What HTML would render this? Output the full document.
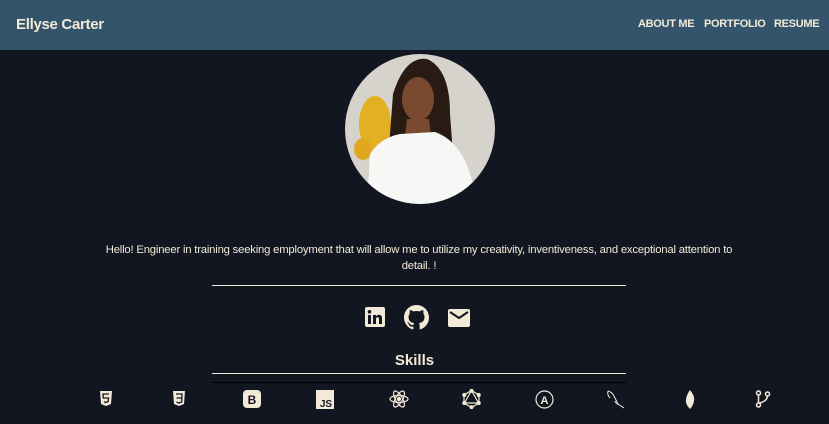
<!DOCTYPE html>
<html><head><meta charset="utf-8"><style>
*{margin:0;padding:0;box-sizing:border-box}
body{width:829px;height:424px;overflow:hidden;background:#121621;font-family:"Liberation Sans",sans-serif;color:#f2ead7;position:relative}
.hdr{position:absolute;left:0;top:0;width:829px;height:50px;background:#34546b}
.brand{position:absolute;left:16px;top:16px;font-size:15px;font-weight:bold;letter-spacing:-0.3px}
.nav{position:absolute;top:18px;font-size:11px;font-weight:bold;letter-spacing:-0.3px}
.p{position:absolute;left:102px;width:634px;top:242px;text-align:center;font-size:11.3px;line-height:16px;letter-spacing:-0.2px}
.ln{position:absolute;left:212px;width:414px;height:1px;background:#f2ead7}
.ic{position:absolute}
</style></head><body>
<div class="hdr"></div>
<div class="brand">Ellyse Carter</div>
<div class="nav" style="left:638px">ABOUT ME</div>
<div class="nav" style="left:704px">PORTFOLIO</div>
<div class="nav" style="left:774px">RESUME</div>

<svg style="position:absolute;left:345px;top:54px" width="150" height="150" viewBox="0 0 150 150">
<defs><clipPath id="c"><circle cx="75" cy="75" r="75"/></clipPath></defs>
<g clip-path="url(#c)">
<rect width="150" height="150" fill="#d6d2cc"/>
<ellipse cx="30" cy="70" rx="16" ry="28" fill="#e3b024"/>
<ellipse cx="18" cy="95" rx="9" ry="11" fill="#e0a820"/>
<path d="M48 40 Q60 2 82 5 Q105 15 105 60 L108 100 L40 120 L45 80Z" fill="#2a1a14"/>
<ellipse cx="73" cy="45" rx="16" ry="22" fill="#7a4a30"/>
<path d="M62 65 L84 65 L86 82 L60 82Z" fill="#7a4a30"/>
<path d="M22 150 L25 100 Q35 84 55 80 L90 78 Q118 88 128 130 L125 150Z" fill="#f7f7f5"/>
</g></svg>

<div class="p">Hello! Engineer in training seeking employment that will allow me to utilize my creativity, inventiveness, and exceptional attention to detail. !</div>
<div class="ln" style="top:285px"></div>

<svg class="ic" style="left:365px;top:307px" width="20" height="20" viewBox="0 0 20 20"><rect x="0" y="0" width="20" height="20" rx="2" fill="#f2ead7"/><rect x="3" y="8" width="3" height="9" fill="#121621"/><circle cx="4.5" cy="4.8" r="1.8" fill="#121621"/><path d="M8 8h3v1.5q1-1.8 3-1.8 3 0 3 3.5V17h-3v-5q0-1.7-1.4-1.7T11 12v5H8z" fill="#121621"/></svg>
<svg class="ic" style="left:404px;top:305px" width="25" height="25" viewBox="0 0 16 16"><path fill="#f2ead7" d="M8 0C3.58 0 0 3.58 0 8c0 3.54 2.290 6.53 5.470 7.59.4.07.55-.17.55-.38 0-.19-.01-.82-.01-1.49-2.01.37-2.53-.49-2.69-.94-.09-.23-.48-.94-.82-1.13-.28-.15-.68-.52-.01-.53.63-.01 1.08.58 1.23.82.72 1.21 1.870.87 2.330.66.07-.52.28-.87.51-1.07-1.78-.2-3.64-.89-3.64-3.95 0-.87.31-1.59.82-2.15-.08-.2-.36-1.02.08-2.12 0 0 .67-.21 2.2.82.64-.18 1.32-.27 2-.27.68 0 1.36.09 2 .27 1.53-1.04 2.2-.82 2.2-.82.44 1.1.16 1.92.08 2.12.51.56.82 1.27.82 2.15 0 3.07-1.87 3.75-3.65 3.95.29.25.54.73.54 1.48 0 1.07-.01 1.93-.01 2.2 0 .21.15.46.55.38A8.013 8.013 0 0016 8c0-4.42-3.58-8-8-8z"/></svg>
<svg class="ic" style="left:448px;top:309px" width="22" height="18" viewBox="0 0 22 18"><rect width="22" height="18" rx="2" fill="#f2ead7"/><path d="M2 3l9 6 9-6" stroke="#121621" stroke-width="2" fill="none"/></svg>

<div style="position:absolute;left:0;width:829px;top:352px;text-align:center;font-size:15px;font-weight:bold">Skills</div>
<div class="ln" style="top:373px"></div>
<div class="ln" style="top:382px;background:#000"></div>

<svg class="ic" style="left:99px;top:391px" width="14" height="16" viewBox="0 0 14 16"><path d="M1 0h12l-1 13-5 2-5-2z" fill="#f2ead7"/><path d="M10 3H4l.3 4h5.2l-.3 3.5L7 11.5 5 10.8" stroke="#121621" stroke-width="1.3" fill="none"/></svg>
<svg class="ic" style="left:172px;top:391px" width="14" height="16" viewBox="0 0 14 16"><path d="M1 0h12l-1 13-5 2-5-2z" fill="#f2ead7"/><path d="M4 3h6l-.3 8L7 12l-2.5-1M4.5 7h5" stroke="#121621" stroke-width="1.3" fill="none"/></svg>
<svg class="ic" style="left:243px;top:390px" width="18" height="18" viewBox="0 0 18 18"><rect width="18" height="18" rx="4" fill="#f2ead7"/><text x="9" y="14" text-anchor="middle" font-size="12" font-weight="bold" fill="#121621" font-family="Liberation Sans">B</text></svg>
<svg class="ic" style="left:316px;top:390px" width="18" height="19" viewBox="0 0 18 19"><rect width="18" height="19" fill="#f2ead7"/><text x="10" y="17" text-anchor="middle" font-size="10" font-weight="bold" fill="#121621" font-family="Liberation Sans">JS</text></svg>
<svg class="ic" style="left:389px;top:389px" width="20" height="20" viewBox="0 0 20 20" fill="none" stroke="#f2ead7" stroke-width="1.2"><ellipse cx="10" cy="10" rx="9" ry="3.5"/><ellipse cx="10" cy="10" rx="9" ry="3.5" transform="rotate(60 10 10)"/><ellipse cx="10" cy="10" rx="9" ry="3.5" transform="rotate(120 10 10)"/><circle cx="10" cy="10" r="1.6" fill="#f2ead7"/></svg>
<svg class="ic" style="left:462px;top:389px" width="19" height="20" viewBox="0 0 19 20" fill="none" stroke="#f2ead7" stroke-width="1.2"><path d="M9.5 1.5L17 6v8l-7.5 4.5L2 14V6zM9.5 1.5L2.5 14h14z"/><g fill="#f2ead7"><circle cx="9.5" cy="1.8" r="1.5"/><circle cx="2.3" cy="6" r="1.5"/><circle cx="16.7" cy="6" r="1.5"/><circle cx="2.3" cy="14" r="1.5"/><circle cx="16.7" cy="14" r="1.5"/><circle cx="9.5" cy="18.2" r="1.5"/></g></svg>
<svg class="ic" style="left:535px;top:390px" width="19" height="19" viewBox="0 0 19 19" fill="none" stroke="#f2ead7" stroke-width="1.2"><circle cx="9.5" cy="9.5" r="8.5"/><text x="9.5" y="14" text-anchor="middle" font-size="11" font-weight="bold" fill="#f2ead7" stroke="none" font-family="Liberation Sans">A</text></svg>
<svg class="ic" style="left:606px;top:389px" width="20" height="20" viewBox="0 0 20 20" fill="none" stroke="#f2ead7" stroke-width="1"><path d="M2 2q4 1 6 5t4 8q3 2 6 4M2 2q-1 4 2 7M12 15q-2 0-3-3"/></svg>
<svg class="ic" style="left:685px;top:390px" width="10" height="19" viewBox="0 0 10 19"><path d="M5 0Q10 6 9 11T5 19Q0 14 1 9T5 0z" fill="#f2ead7"/></svg>
<svg class="ic" style="left:755px;top:390px" width="16" height="18" viewBox="0 0 16 18" fill="none" stroke="#f2ead7" stroke-width="1.5"><circle cx="3.5" cy="3" r="2"/><circle cx="3.5" cy="15" r="2"/><circle cx="12.5" cy="4" r="2"/><path d="M3.5 5v8M12.5 6q0 5-8 7"/></svg>
</body></html>
